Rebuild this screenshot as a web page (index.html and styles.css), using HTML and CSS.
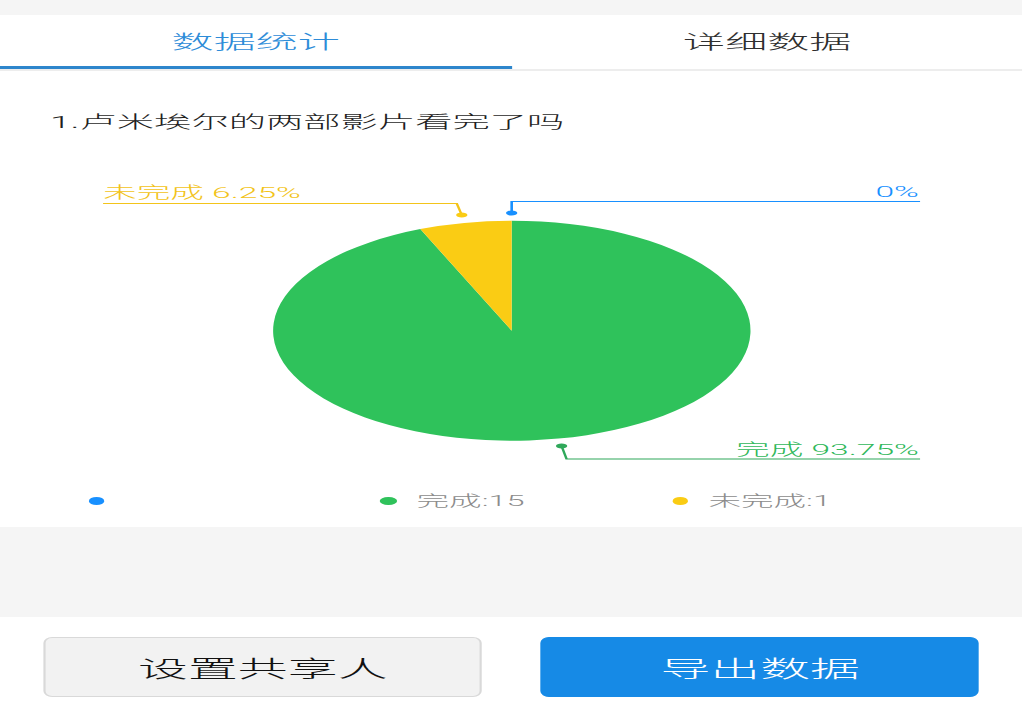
FILE: index.html
```html
<!DOCTYPE html>
<html lang="zh-CN">
<head>
<meta charset="utf-8">
<title>数据统计</title>
<link rel="stylesheet" href="styles.css">
</head>
<body>
<div class="page">
  <div class="topbar"></div>
  <nav class="tabs">
    <div class="tab active">数据统计</div>
    <div class="tab">详细数据</div>
  </nav>
  <section class="card">
    <h2 class="question">1.卢米埃尔的两部影片看完了吗</h2>
    <svg class="chart" width="471.43" height="320" viewBox="0 0 471.43 320">
      <path class="slice-green" d="M235.8 170.7 L235.8 60.7 A110 110 0 1 1 193.7 69.1 Z"/>
      <path class="slice-yellow" d="M235.8 170.7 L235.8 60.7 A110 110 0 0 0 193.7 69.1 Z"/>

      <polyline class="lbl-line yellow" points="47.5,43.5 210.5,43.5 212.8,55"/>
      <circle class="lbl-dot yellow" cx="212.8" cy="55" r="2.6"/>
      <text class="lbl-text yellow" x="47.5" y="38.5">未完成 6.25%</text>

      <polyline class="lbl-line blue" points="235.8,53 235.8,41.5 424,41.5"/>
      <circle class="lbl-dot blue" cx="235.8" cy="53" r="2.6"/>
      <text class="lbl-text blue end" x="423.5" y="37.3">0%</text>

      <polyline class="lbl-line green" points="258.8,286 261.1,299 424,299"/>
      <circle class="lbl-dot green" cx="258.8" cy="286" r="2.6"/>
      <text class="lbl-text green end" x="423.5" y="295">完成 93.75%</text>
    </svg>
    <div class="legend">
      <div class="legend-item"><span class="dot dot-blue"></span><span class="legend-text"></span></div>
      <div class="legend-item"><span class="dot dot-green"></span><span class="legend-text">完成:15</span></div>
      <div class="legend-item"><span class="dot dot-yellow"></span><span class="legend-text">未完成:1</span></div>
    </div>
  </section>
  <div class="spacer"></div>
  <footer class="actions">
    <button class="btn btn-light">设置共享人</button>
    <button class="btn btn-primary">导出数据</button>
  </footer>
</div>
</body>
</html>
```

FILE: styles.css
```css
html, body {
  margin: 0;
  padding: 0;
  background: #ffffff;
  overflow: hidden;
}

body {
  width: 1023px;
  height: 713px;
  font-family: Roboto, "Noto Sans CJK SC", sans-serif;
  font-weight: 300;
}

.page {
  width: 471.43px;
  height: 713px;
  transform: scaleX(2.17);
  transform-origin: 0 0;
  display: flex;
  flex-direction: column;
  background: #ffffff;
}

.topbar {
  height: 15px;
  background: #f5f5f5;
}

.tabs {
  display: flex;
  background: #ffffff;
  border-bottom: 2px solid #ededed;
}

.tab {
  flex: 1;
  height: 54px;
  box-sizing: border-box;
  border-bottom: 3px solid transparent;
  display: flex;
  align-items: center;
  justify-content: center;
  font-family: "Noto Sans CJK SC", sans-serif;
  font-size: 19.4px;
  font-weight: 300;
  color: #2e2e2e;
}

.tab.active {
  color: #2d8cd8;
  border-bottom-color: #2d86cc;
}

.card {
  background: #ffffff;
  padding-bottom: 16px;
  display: flex;
  flex-direction: column;
}

.question {
  margin: 0;
  padding: 39px 0 0 23px;
  font-family: Roboto, "Noto Sans CJK SC", sans-serif;
  font-size: 17.2px;
  line-height: 24px;
  font-weight: 300;
  color: #1f1f1f;
}

.chart {
  display: block;
  margin-top: 26px;
}

.slice-green { fill: #2fc25b; }
.slice-yellow { fill: #facc14; }

.lbl-line {
  fill: none;
  stroke-width: 1.2;
}
.lbl-line.yellow { stroke: #f3c41a; }
.lbl-line.blue { stroke: #1890ff; }
.lbl-line.green { stroke: #2fa85a; }

.lbl-dot.yellow { fill: #facc14; }
.lbl-dot.blue { fill: #1890ff; }
.lbl-dot.green { fill: #2fa85a; }

.lbl-text {
  font-family: Roboto, "Noto Sans CJK SC", sans-serif;
  font-size: 15.5px;
  font-weight: 300;
}
.lbl-text.yellow { fill: #f2c318; }
.lbl-text.blue { fill: #1890ff; }
.lbl-text.green { fill: #2fb85a; }
.lbl-text.end { text-anchor: end; }

.legend {
  display: flex;
  margin-top: 11px;
  padding-left: 40.6px;
  height: 20px;
}

.legend-item {
  width: 134.5px;
  display: flex;
  align-items: center;
  gap: 9.2px;
}

.dot {
  width: 7.7px;
  height: 8px;
  border-radius: 50%;
  flex: none;
}
.dot-blue { background: #1890ff; }
.dot-green { background: #2fc25b; }
.dot-yellow { background: #facc14; }

.legend-text {
  font-size: 15px;
  line-height: 20px;
  color: #8c8c8c;
}

.spacer {
  height: 90px;
  background: #f5f5f5;
}

.actions {
  flex: 1;
  display: flex;
  gap: 27px;
  padding: 20px 20px 16px;
  background: #ffffff;
}

.btn {
  flex: 1;
  height: 60px;
  margin: 0;
  border-radius: 4px / 6px;
  font-family: "Noto Sans CJK SC", sans-serif;
  font-size: 23px;
  font-weight: 300;
  padding: 0;
  cursor: pointer;
}

.btn-light {
  background: #f2f2f2;
  border: 1px solid #d9d9d9;
  color: #111111;
}

.btn-primary {
  background: #168ae6;
  border: 1px solid #168ae6;
  color: #ffffff;
}
```
